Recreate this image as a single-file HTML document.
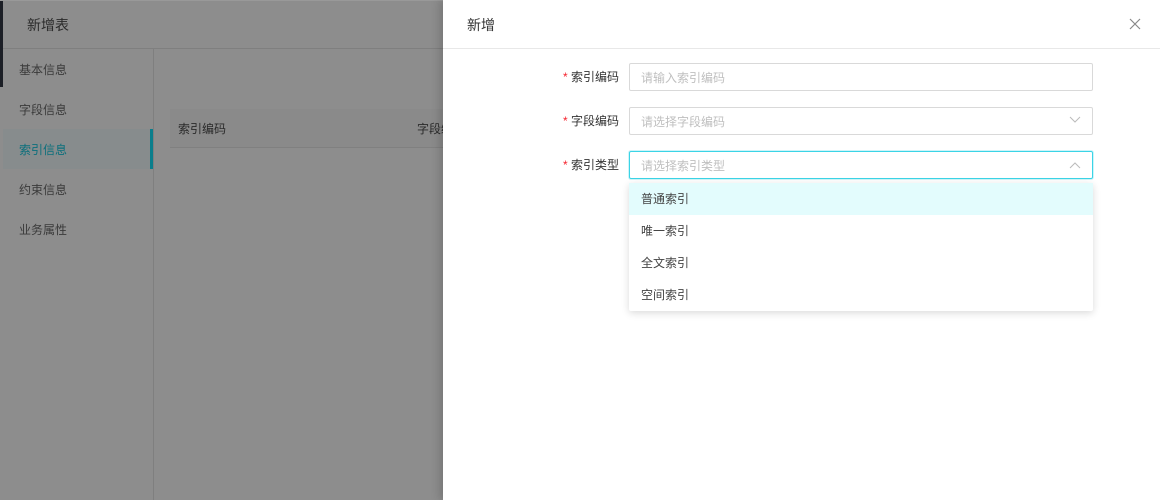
<!DOCTYPE html>
<html><head><meta charset="utf-8"><style>
*{box-sizing:border-box;margin:0;padding:0}
body{width:1160px;height:500px;overflow:hidden;position:relative;background:#8d8d8d;font-family:"Liberation Sans","Noto Sans CJK SC",sans-serif;font-size:12px;color:#333}
.abs{position:absolute}
</style></head><body>
<div class="abs" style="left:0;top:0;width:3px;height:87px;background:#1c1f26"></div>
<div class="abs" style="left:0;top:0;width:443px;height:1px;background:#999"></div>
<div class="abs" style="left:27px;top:15px;font-size:14px;color:#2a2a2a">新增表</div>
<div class="abs" style="left:3px;top:48px;width:440px;height:1px;background:#7f7f7f"></div>
<div class="abs" style="left:153px;top:49px;width:1px;height:451px;background:#7f7f7f"></div>
<div class="abs" style="left:3px;top:129px;width:150px;height:40px;background:#878c8d"></div>
<div class="abs" style="left:150px;top:129px;width:3px;height:40px;background:#0a7e8c"></div>
<div class="abs" style="left:19px;top:61px;color:#3a3a3a">基本信息</div>
<div class="abs" style="left:19px;top:101px;color:#3a3a3a">字段信息</div>
<div class="abs" style="left:19px;top:141px;color:#0b6f7c">索引信息</div>
<div class="abs" style="left:19px;top:181px;color:#3a3a3a">约束信息</div>
<div class="abs" style="left:19px;top:221px;color:#3a3a3a">业务属性</div>
<div class="abs" style="left:170px;top:109px;width:273px;height:39px;background:#8a8a8a;border-bottom:1px solid #808080"></div>
<div class="abs" style="left:178px;top:120px;color:#2a2a2a">索引编码</div>
<div class="abs" style="left:417px;top:120px;color:#2a2a2a">字段编</div>
<div class="abs" style="left:443px;top:0;width:717px;height:500px;background:#fff;box-shadow:-4px 0 8px rgba(0,0,0,.15)">
<div class="abs" style="left:24px;top:15px;font-size:14px;color:#333">新增</div>
<div class="abs" style="left:0;top:48px;width:717px;height:1px;background:#e8e8e8"></div>
<svg class="abs" style="left:686px;top:18px" width="12" height="12"><path d="M1 1L11 11M11 1L1 11" stroke="#888" stroke-width="1.2"/></svg>
</div>
<div class="abs" style="left:563px;top:68px;color:#333"><span style="color:#f5222d">*</span> 索引编码</div>
<div class="abs" style="left:563px;top:112px;color:#333"><span style="color:#f5222d">*</span> 字段编码</div>
<div class="abs" style="left:563px;top:156px;color:#333"><span style="color:#f5222d">*</span> 索引类型</div>
<div class="abs" style="left:629px;top:63px;width:464px;height:28px;border:1px solid #d9d9d9;border-radius:2px;padding:5px 11px;color:#bfbfbf">请输入索引编码</div>
<div class="abs" style="left:629px;top:107px;width:464px;height:28px;border:1px solid #d9d9d9;border-radius:2px;padding:5px 11px;color:#bfbfbf">请选择字段编码</div>
<svg class="abs" style="left:1069px;top:116px" width="12" height="8"><path d="M1 1L6 6L11 1" fill="none" stroke="#bbb"/></svg>
<div class="abs" style="left:629px;top:151px;width:464px;height:28px;border:1px solid #3bd4e6;border-radius:2px;padding:5px 11px;color:#bfbfbf;box-shadow:0 0 0 1px rgba(59,212,230,.25)">请选择索引类型</div>
<svg class="abs" style="left:1069px;top:161px" width="12" height="8"><path d="M1 7L6 2L11 7" fill="none" stroke="#bbb"/></svg>
<div class="abs" style="left:629px;top:183px;width:464px;height:128px;background:#fff;box-shadow:0 2px 8px rgba(0,0,0,.15);border-radius:2px">
<div style="height:32px;line-height:32px;padding-left:12px;background:#e3fcfd;color:#444">普通索引</div>
<div style="height:32px;line-height:32px;padding-left:12px;color:#444">唯一索引</div>
<div style="height:32px;line-height:32px;padding-left:12px;color:#444">全文索引</div>
<div style="height:32px;line-height:32px;padding-left:12px;color:#444">空间索引</div>
</div>
</body></html>
